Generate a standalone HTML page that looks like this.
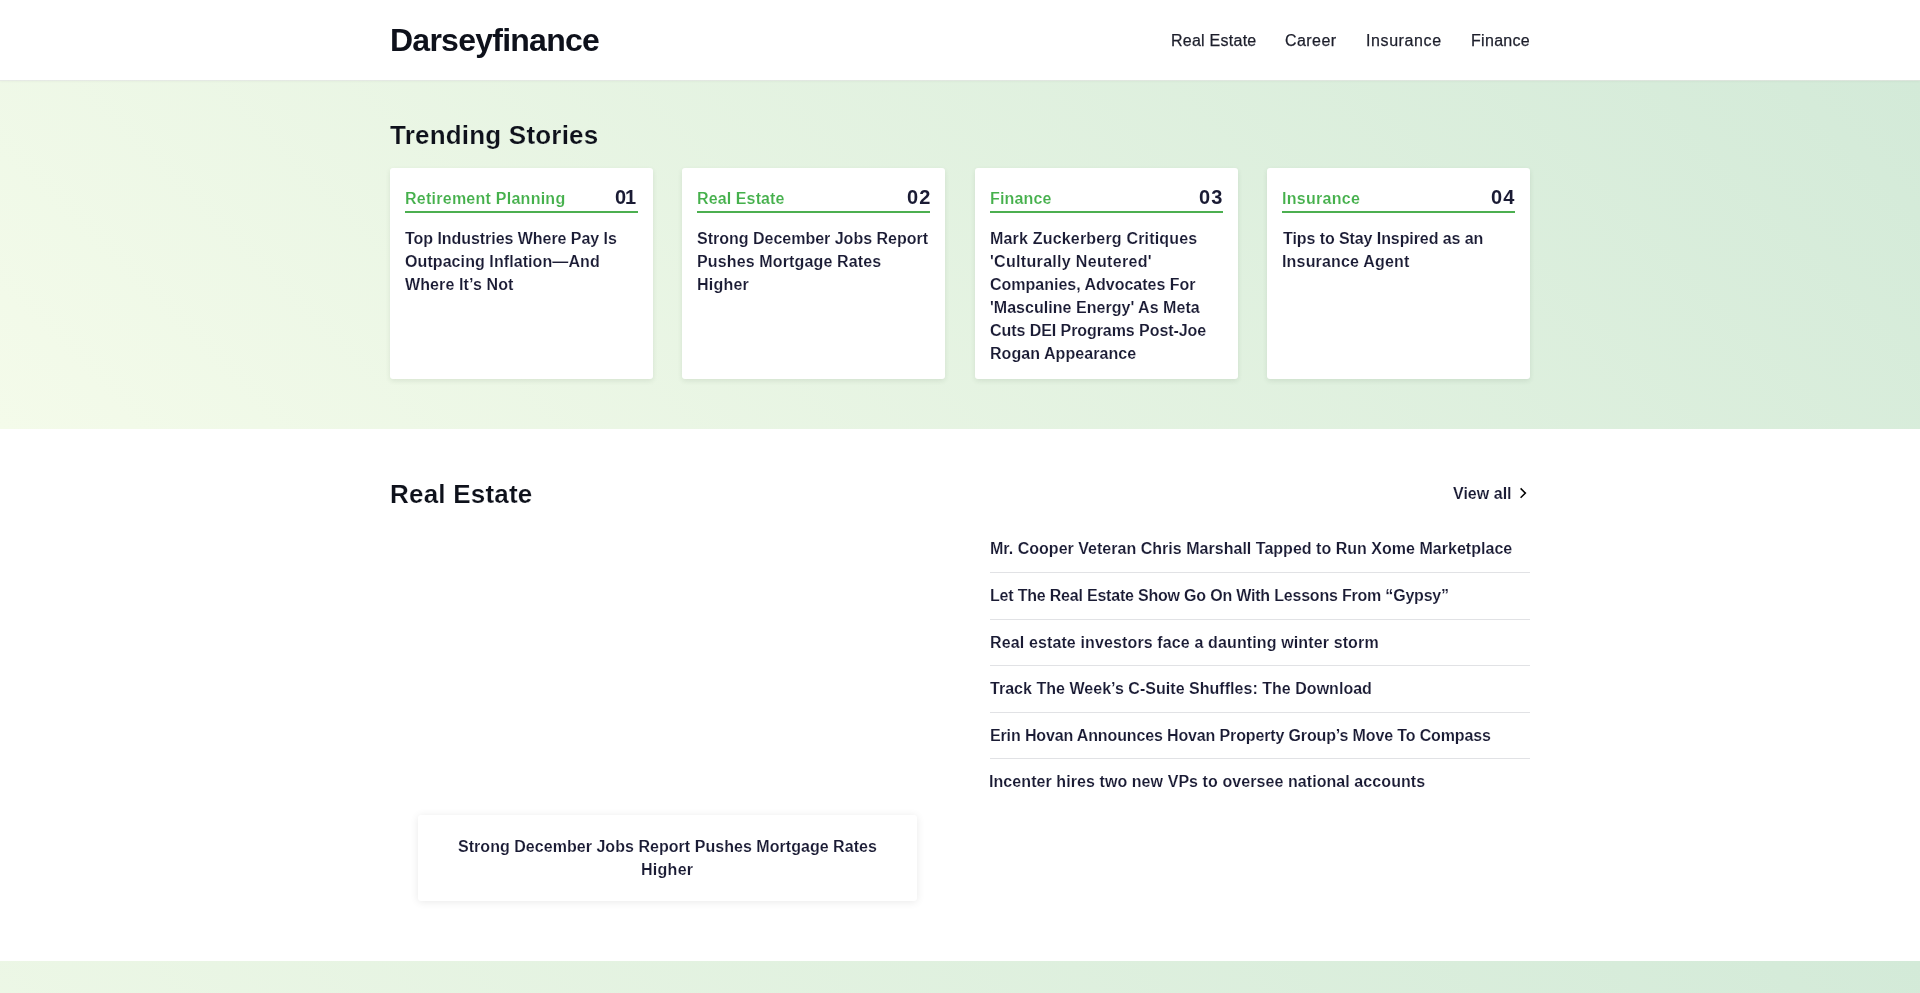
<!DOCTYPE html>
<html lang="en">
<head>
<meta charset="utf-8">
<title>Darseyfinance</title>
<style>
*{box-sizing:border-box;margin:0;padding:0}
html,body{width:1920px;height:993px;overflow:hidden;background:#fff}
body{font-family:"Liberation Sans",Arial,sans-serif;color:#1a1b34;position:relative}
a{color:inherit;text-decoration:none}
ul{list-style:none}
.t{position:absolute;white-space:nowrap;line-height:17px;display:block;font-weight:700;font-size:16px;color:#1a1b34;-webkit-text-stroke:0.13px #fff;will-change:transform}
header{position:absolute;left:0;top:0;width:1920px;height:80px;background:#fff}
.hline{position:absolute;left:0;top:80px;width:1920px;height:1px;background:linear-gradient(90deg,#e6eae5,#dce4dc);box-shadow:0 1px 2px rgba(0,0,0,.045)}
#logo{font-size:32px;line-height:36px;color:#0e111b;font-weight:700;-webkit-text-stroke:0}
nav .t{font-weight:400;color:#1c1e2b;-webkit-text-stroke:0.25px currentColor}
h2.t{font-size:26px;line-height:30px;color:#0e111b;font-weight:700;-webkit-text-stroke:0.18px #fff}
#h1{-webkit-text-stroke-color:#e9f5e3}
.trend,.next{background:linear-gradient(45deg,#f4fbea 0%,#d3ead8 100%)}
.trend{position:absolute;left:0;top:80px;width:1920px;height:349px}
.card{position:absolute;top:88px;width:262.5px;height:211px;background:#fff;border-radius:3px;box-shadow:0 2px 5px rgba(40,70,40,.10)}
.card .rule{position:absolute;left:15px;right:15px;top:43px;height:2px;background:#4caf50}
.cat{color:#45b04c}
.num{font-size:20px;line-height:22px;font-weight:700;-webkit-text-stroke:0}
.sec{position:absolute;left:0;top:429px;width:1920px;height:532px;background:#fff}
.chev{position:absolute;left:1515px;top:53px}
.feat{position:absolute;left:390px;top:97px;width:555px;height:380px}
.ov{position:absolute;left:28px;top:289px;width:499px;height:86px;background:#fff;border-radius:3px;box-shadow:0 1px 8px rgba(0,0,0,.09)}
.list{position:absolute;left:990px;top:97px;width:540px}
.list li{position:relative;height:47px;border-bottom:1px solid #e1e2e5}
.list li:nth-child(3),.list li:nth-child(5){height:46px}
.list li:last-child{border-bottom:0}
.next{position:absolute;left:0;top:961px;width:1920px;height:640px}
</style>
</head>
<body>
<header>
<a id="logo" href="#" class="t" style="left:390px;top:22px;letter-spacing:-0.748px">Darseyfinance</a>
<nav><a id="n1" href="#" class="t" style="left:1171px;top:32px;letter-spacing:0.253px">Real Estate</a><a id="n2" href="#" class="t" style="left:1285px;top:32px;letter-spacing:0.427px">Career</a><a id="n3" href="#" class="t" style="left:1366px;top:32px;letter-spacing:0.595px">Insurance</a><a id="n4" href="#" class="t" style="left:1471px;top:32px;letter-spacing:0.308px">Finance</a></nav>
</header>
<section class="trend">
<h2 id="h1" class="t" style="left:390px;top:40px;letter-spacing:0.206px">Trending Stories</h2>
<article class="card" style="left:390px;width:262.5px"><span id="c1cat" class="t cat" style="left:15px;top:22px;letter-spacing:0.255px">Retirement Planning</span><span id="c1num" class="t num" style="left:225px;top:18px;letter-spacing:-1.000px">01</span><div class="rule"></div><p><span id="c1l1" class="t" style="left:15px;top:62px;letter-spacing:-0.046px">Top Industries Where Pay Is</span><span id="c1l2" class="t" style="left:15px;top:85px;letter-spacing:0.081px">Outpacing Inflation—And</span><span id="c1l3" class="t" style="left:15px;top:108px;letter-spacing:0.113px">Where It’s Not</span></p></article>
<article class="card" style="left:682px;width:263px"><span id="c2cat" class="t cat" style="left:15px;top:22px;letter-spacing:0.117px">Real Estate</span><span id="c2num" class="t num" style="left:225px;top:18px;letter-spacing:1.200px">02</span><div class="rule"></div><p><span id="c2l1" class="t" style="left:15px;top:62px;letter-spacing:-0.006px">Strong December Jobs Report</span><span id="c2l2" class="t" style="left:15px;top:85px;letter-spacing:0.137px">Pushes Mortgage Rates</span><span id="c2l3" class="t" style="left:15px;top:108px;letter-spacing:0.221px">Higher</span></p></article>
<article class="card" style="left:975px;width:262.5px"><span id="c3cat" class="t cat" style="left:15px;top:22px;letter-spacing:0.164px">Finance</span><span id="c3num" class="t num" style="left:224px;top:18px;letter-spacing:1.200px">03</span><div class="rule"></div><p><span id="c3l1" class="t" style="left:15px;top:62px;letter-spacing:0.189px">Mark Zuckerberg Critiques</span><span id="c3l2" class="t" style="left:15px;top:85px;letter-spacing:0.317px">'Culturally Neutered'</span><span id="c3l3" class="t" style="left:15px;top:108px;letter-spacing:-0.006px">Companies, Advocates For</span><span id="c3l4" class="t" style="left:15px;top:131px;letter-spacing:0.031px">'Masculine Energy' As Meta</span><span id="c3l5" class="t" style="left:15px;top:154px;letter-spacing:-0.066px">Cuts DEI Programs Post-Joe</span><span id="c3l6" class="t" style="left:15px;top:177px;letter-spacing:0.063px">Rogan Appearance</span></p></article>
<article class="card" style="left:1267px;width:263px"><span id="c4cat" class="t cat" style="left:15px;top:22px;letter-spacing:0.289px">Insurance</span><span id="c4num" class="t num" style="left:224px;top:18px;letter-spacing:1.200px">04</span><div class="rule"></div><p><span id="c4l1" class="t" style="left:16px;top:62px;letter-spacing:-0.081px">Tips to Stay Inspired as an</span><span id="c4l2" class="t" style="left:15px;top:85px;letter-spacing:0.176px">Insurance Agent</span></p></article>
</section>
<section class="sec">
<h2 id="h2" class="t" style="left:390px;top:50px;letter-spacing:0.210px">Real Estate</h2>
<a id="va" href="#" class="t" style="left:1453px;top:56px;letter-spacing:0.022px">View all</a>
<svg class="chev" width="16" height="22" viewBox="0 0 16 22"><path d="M5.6 6.4 L10.4 11.1 L5.6 15.8" fill="none" stroke="#000" stroke-width="1.5"/></svg>
<div class="feat"><div class="ov"><span id="ov1" class="t" style="left:40px;top:23px;letter-spacing:0.039px">Strong December Jobs Report Pushes Mortgage Rates</span><span id="ov2" class="t" style="left:223px;top:46px;letter-spacing:0.275px">Higher</span></div></div>
<ul class="list"><li><a id="li0" href="#" class="t" style="left:0px;top:14px;letter-spacing:0.024px">Mr. Cooper Veteran Chris Marshall Tapped to Run Xome Marketplace</a></li><li><a id="li1" href="#" class="t" style="left:0px;top:14px;letter-spacing:-0.202px">Let The Real Estate Show Go On With Lessons From “Gypsy”</a></li><li><a id="li2" href="#" class="t" style="left:0px;top:14px;letter-spacing:0.128px">Real estate investors face a daunting winter storm</a></li><li><a id="li3" href="#" class="t" style="left:0px;top:14px;letter-spacing:0.030px">Track The Week’s C-Suite Shuffles: The Download</a></li><li><a id="li4" href="#" class="t" style="left:0px;top:14px;letter-spacing:-0.137px">Erin Hovan Announces Hovan Property Group’s Move To Compass</a></li><li><a id="li5" href="#" class="t" style="left:-1px;top:14px;letter-spacing:0.074px">Incenter hires two new VPs to oversee national accounts</a></li></ul>
</section>
<section class="next"></section>
<div class="hline"></div>
</body>
</html>
